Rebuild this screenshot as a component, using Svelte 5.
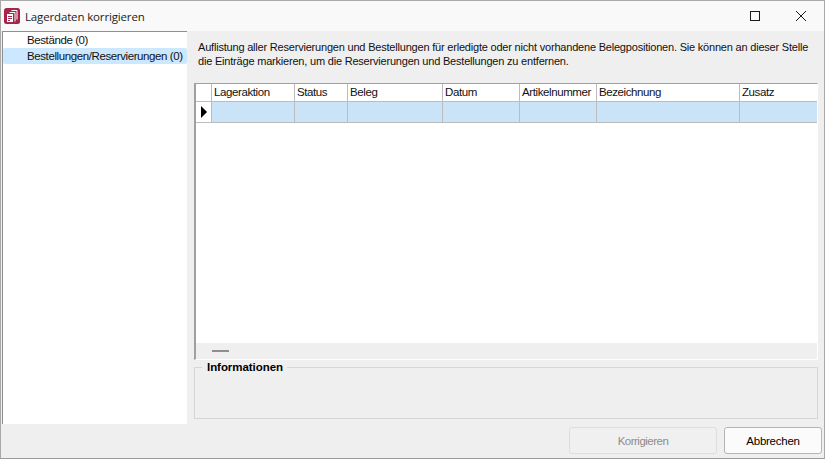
<script>
	const columns = [
		{ label: "Lageraktion", width: 83 },
		{ label: "Status", width: 53 },
		{ label: "Beleg", width: 95 },
		{ label: "Datum", width: 77 },
		{ label: "Artikelnummer", width: 77 },
		{ label: "Bezeichnung", width: 143 },
		{ label: "Zusatz", width: 78 },
	];

	const navItems = [
		{ label: "Bestände (0)", selected: false },
		{ label: "Bestellungen/Reservierungen (0)", selected: true },
	];
</script>

<div class="window">
	<header class="titlebar">
		<svg class="app-icon" width="16" height="16" viewBox="0 0 16 16">
			<rect x="0" y="0" width="16" height="16" rx="2.5" fill="#a5264a" />
			<path d="M7.500 2.500h5.500v9" fill="none" stroke="#fff" stroke-width="1" />
			<path d="M5.500 4.500h5.500v9" fill="none" stroke="#fff" stroke-width="1" />
			<rect x="3" y="6" width="6" height="8" fill="#fff" />
			<path d="M4 8.500h4M4 10.500h4M4 12.500h2" stroke="#a5264a" stroke-width="1" />
		</svg>
		<span class="title">Lagerdaten korrigieren</span>
		<div class="controls">
			<button class="control" aria-label="Maximieren">
				<svg width="10" height="10" viewBox="0 0 10 10"><rect x="0.500" y="0.500" width="9" height="9" fill="none" stroke="#1a1a1a" /></svg>
			</button>
			<button class="control" aria-label="Schließen">
				<svg width="10" height="10" viewBox="0 0 10 10"><path d="M0 0L10 10M10 0L0 10" stroke="#1a1a1a" stroke-width="1" /></svg>
			</button>
		</div>
	</header>

	<div class="body">
		<nav class="nav">
			{#each navItems as item}
				<div class="nav-item" class:selected={item.selected}>{item.label}</div>
			{/each}
		</nav>

		<main class="content">
			<p class="intro">Auflistung aller Reservierungen und Bestellungen für erledigte oder nicht vorhandene Belegpositionen. Sie können an dieser Stelle die Einträge markieren, um die Reservierungen und Bestellungen zu entfernen.</p>

			<div class="grid">
				<div class="row head">
					<div class="indicator"></div>
					{#each columns as col}
						<div class="cell" style="width: {col.width}px">{col.label}</div>
					{/each}
				</div>
				<div class="row current">
					<div class="indicator"><span class="arrow"></span></div>
					{#each columns as col}
						<div class="cell" style="width: {col.width}px"></div>
					{/each}
				</div>
				<div class="grid-space"></div>
				<div class="grid-foot"><span class="dash"></span></div>
			</div>

			<fieldset class="info">
				<legend>Informationen</legend>
			</fieldset>
		</main>
	</div>

	<footer class="actions">
		<button class="btn disabled" disabled>Korrigieren</button>
		<button class="btn cancel">Abbrechen</button>
	</footer>
</div>

<style>
	:global(body) {
		background: #efefef;
	}

	.window {
		width: 825px;
		height: 459px;
		box-sizing: border-box;
		display: flex;
		flex-direction: column;
		background: #efefef;
		border: 1px solid #a9a9a9;
		border-bottom-color: #9a9a9a;
		font-family: "Liberation Sans", Arial, sans-serif;
		font-size: 11.5px;
		letter-spacing: -0.4px;
		color: #111;
		overflow: hidden;
	}

	.titlebar {
		height: 30px;
		flex: none;
		display: flex;
		align-items: center;
		background: #f9f9f9;
		padding-left: 3px;
	}

	.app-icon {
		margin-right: 5px;
	}

	.title {
		font-family: "Open Sans", sans-serif;
		font-size: 11.5px;
		letter-spacing: -0.15px;
		color: #1c1c1c;
	}

	.controls {
		margin-left: auto;
		display: flex;
	}

	.control {
		width: 46px;
		height: 30px;
		padding: 0;
		border: 0;
		background: none;
		display: flex;
		align-items: center;
		justify-content: center;
	}

	.body {
		flex: 1;
		display: flex;
		min-height: 0;
	}

	.nav {
		width: 184px;
		margin-left: 1px;
		background: #fff;
		border-left: 1px solid #8f8f8f;
		border-top: 1px solid #8f8f8f;
		flex: none;
	}

	.nav-item {
		height: 16px;
		line-height: 16px;
		padding-left: 24px;
		white-space: nowrap;
		border-radius: 2px;
	}

	.selected {
		background: #cce8ff;
	}

	.content {
		flex: 1;
		min-width: 0;
		padding: 9px 6px 0 7px;
		display: flex;
		flex-direction: column;
	}

	.intro {
		margin: 0 0 0 4px;
		font-size: 11px;
		letter-spacing: -0.2px;
		line-height: 14px;
		width: 620px;
		height: 43px;
	}

	.grid {
		height: 277px;
		flex: none;
		box-sizing: border-box;
		background: #fff;
		border-left: 2px solid #a0a0a0;
		border-top: 1px solid #a0a0a0;
		border-bottom: 1px solid #fff;
		border-right: 1px solid #fff;
		display: flex;
		flex-direction: column;
	}

	.row {
		display: flex;
		flex: none;
	}

	.head {
		height: 17px;
		line-height: 16px;
		background: #fff;
		border-bottom: 1px solid #bcbcbc;
	}

	.current {
		height: 20px;
		border-bottom: 1px solid #bcbcbc;
		background: #cbe3f7;
	}

	.indicator {
		width: 15px;
		flex: none;
		background: #fff;
		border-right: 1px solid #bcbcbc;
		display: flex;
		align-items: center;
		justify-content: center;
	}

	.arrow {
		width: 0;
		height: 0;
		border-left: 6px solid #000;
		border-top: 6px solid transparent;
		border-bottom: 6px solid transparent;
	}

	.cell {
		flex: none;
		box-sizing: border-box;
		padding-left: 2px;
		border-right: 1px solid #bcbcbc;
		white-space: nowrap;
		overflow: hidden;
	}

	.cell:last-child {
		border-right: 0;
	}

	.grid-space {
		flex: 1;
	}

	.grid-foot {
		height: 16px;
		flex: none;
		background: #efefef;
		display: flex;
		align-items: center;
		padding-left: 16px;
	}

	.dash {
		width: 17px;
		height: 2px;
		background: #8f8f8f;
	}

	.info {
		margin: 0;
		padding: 0;
		height: 59px;
		box-sizing: border-box;
		border: 1px solid #d6d6d6;
		min-width: 0;
	}

	.info legend {
		margin-left: 7px;
		padding: 1px 4px 0 5px;
		font-weight: bold;
		line-height: 13px;
		color: #000;
		letter-spacing: -0.05px;
	}

	.actions {
		height: 34px;
		flex: none;
		display: flex;
		justify-content: flex-end;
		align-items: flex-start;
		gap: 7px;
		padding: 3px 2px 0 0;
		box-sizing: border-box;
	}

	.btn {
		height: 27px;
		font: inherit;
		letter-spacing: -0.25px;
		border-radius: 3px;
		padding: 0;
	}

	.disabled {
		width: 148px;
		background: #f0f0f0;
		border: 1px solid #dedede;
		color: #8c8c8c;
		letter-spacing: -0.5px;
	}

	.cancel {
		width: 98px;
		background: #fbfbfb;
		border: 1px solid #b5b5b5;
		color: #000;
	}
</style>
